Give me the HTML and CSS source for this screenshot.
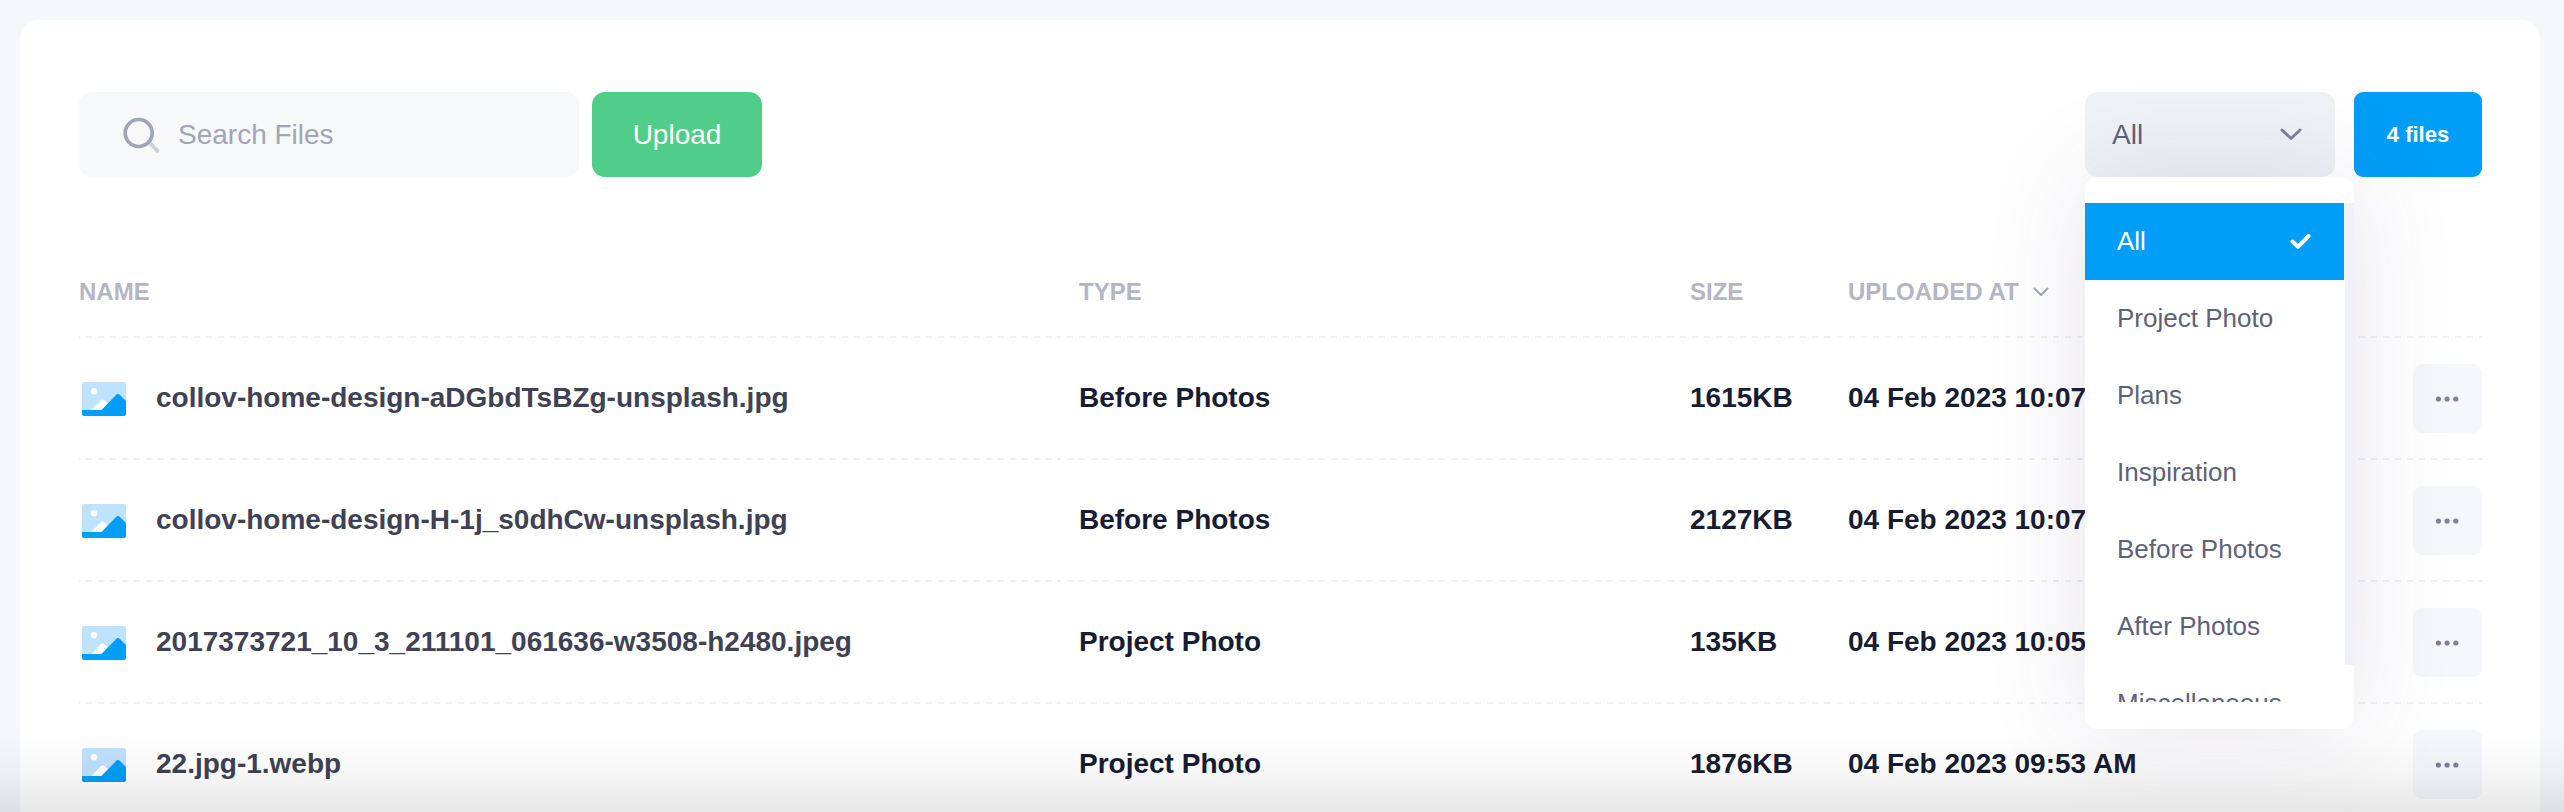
FILE: index.html
```html
<!DOCTYPE html>
<html lang="en">
<head>
<meta charset="utf-8">
<title>Files</title>
<link rel="stylesheet" href="styles.css">
</head>
<body>
<svg class="defs" aria-hidden="true">
  <symbol id="picture" viewBox="0 0 44 34">
    <rect width="44" height="34" rx="2" fill="#bfe2fe"/>
    <circle cx="12" cy="9.300" r="3.200" fill="#fff"/>
    <path d="M9 28 L19 18 Q20.500 16.500 22 18 L26 21 L20 28 Z" fill="#fff"/>
    <path d="M0 28 H19.500 L34 13 Q36 11.200 38 13 L44 19 V32 Q44 34 42 34 H2 Q0 34 0 32 Z" fill="#009ef7"/>
  </symbol>
  <symbol id="dots" viewBox="0 0 24 6">
    <circle cx="3.400" cy="3" r="2.600"/><circle cx="12.100" cy="3" r="2.600"/><circle cx="20.800" cy="3" r="2.600"/>
  </symbol>
</svg>
<main class="card">
  <header class="toolbar">
    <label class="search">
      <svg class="search-icon" width="40" height="40" viewBox="0 0 40 40" fill="none">
        <path d="M28 27 L35.300 34.800" stroke="#a1a5b7" stroke-opacity=".5" stroke-width="3.700" stroke-linecap="round"/>
        <circle cx="16.700" cy="17" r="13.500" stroke="#a1a5b7" stroke-width="3.700"/>
      </svg>
      <span>Search Files</span>
    </label>
    <button class="upload">Upload</button>
    <div class="filter">
      <div class="select">
        <span>All</span>
        <svg width="22" height="13" viewBox="0 0 22 13" fill="none" stroke="#7e8299" stroke-width="3" stroke-linecap="round" stroke-linejoin="round"><path d="M2 2 L11 10.500 L20 2"/></svg>
      </div>
      <div class="menu">
        <ul class="options">
          <li class="option selected">All
            <svg width="21" height="17" viewBox="0 0 21 17" fill="none" stroke="#fff" stroke-width="4" stroke-linecap="round" stroke-linejoin="round"><path d="M2.500 8.500 L8 13.800 L18.500 3"/></svg>
          </li>
          <li class="option">Project Photo</li>
          <li class="option">Plans</li>
          <li class="option">Inspiration</li>
          <li class="option">Before Photos</li>
          <li class="option">After Photos</li>
          <li class="option">Miscellaneous</li>
        </ul>
        <div class="scrollbar"></div>
      </div>
    </div>
    <div class="count">4 files</div>
  </header>

  <section class="table">
    <div class="row head">
      <div class="cell name">NAME</div>
      <div class="cell type">TYPE</div>
      <div class="cell size">SIZE</div>
      <div class="cell date">UPLOADED AT
        <svg width="16" height="10" viewBox="0 0 16 10" fill="none" stroke="#a1a5b7" stroke-width="2" stroke-linecap="round" stroke-linejoin="round"><path d="M1.500 1.500 L8 8 L14.500 1.500"/></svg>
      </div>
      <div class="cell action"></div>
    </div>
    <div class="row">
      <div class="cell name"><svg class="thumb"><use href="#picture"/></svg>collov-home-design-aDGbdTsBZg-unsplash.jpg</div>
      <div class="cell type">Before Photos</div>
      <div class="cell size">1615KB</div>
      <div class="cell date">04 Feb 2023 10:07 AM</div>
      <div class="cell action"><button class="more"><svg><use href="#dots"/></svg></button></div>
    </div>
    <div class="row">
      <div class="cell name"><svg class="thumb"><use href="#picture"/></svg>collov-home-design-H-1j_s0dhCw-unsplash.jpg</div>
      <div class="cell type">Before Photos</div>
      <div class="cell size">2127KB</div>
      <div class="cell date">04 Feb 2023 10:07 AM</div>
      <div class="cell action"><button class="more"><svg><use href="#dots"/></svg></button></div>
    </div>
    <div class="row">
      <div class="cell name"><svg class="thumb"><use href="#picture"/></svg>2017373721_10_3_211101_061636-w3508-h2480.jpeg</div>
      <div class="cell type">Project Photo</div>
      <div class="cell size">135KB</div>
      <div class="cell date">04 Feb 2023 10:05 AM</div>
      <div class="cell action"><button class="more"><svg><use href="#dots"/></svg></button></div>
    </div>
    <div class="row">
      <div class="cell name"><svg class="thumb"><use href="#picture"/></svg>22.jpg-1.webp</div>
      <div class="cell type">Project Photo</div>
      <div class="cell size">1876KB</div>
      <div class="cell date">04 Feb 2023 09:53 AM</div>
      <div class="cell action"><button class="more"><svg><use href="#dots"/></svg></button></div>
    </div>
  </section>
</main>
<div class="fade"></div>
</body>
</html>
```
FILE: styles.css
```css
* { box-sizing: border-box; }

body {
  margin: 0;
  height: 812px;
  overflow: hidden;
  padding: 20px 24px 0 20px;
  background: #f5f7fa;
  font-family: "Liberation Sans", Arial, sans-serif;
  font-size: 28px;
  color: #181c32;
}

.defs { position: absolute; width: 0; height: 0; }

button { border: 0; padding: 0; font: inherit; }

.card {
  height: 792px;
  padding: 72px 58px 0 59px;
  overflow: hidden;
  background: #fff;
  border-radius: 18px 18px 0 0;
}

/* Toolbar */
.toolbar { display: flex; height: 85px; }

.search {
  display: flex;
  align-items: center;
  width: 500px;
  margin-right: 13px;
  padding-left: 43px;
  background: #f6f8fa;
  border-radius: 13px;
  color: #a1a5b7;
}

.search-icon { margin: 2px 16px 0 0; }

.upload {
  width: 170px;
  background: #50cd89;
  border-radius: 13px;
  color: #fff;
}

.filter {
  position: relative;
  width: 250px;
  margin: 0 19px 0 auto;
}

.select {
  display: flex;
  align-items: center;
  justify-content: space-between;
  height: 85px;
  padding: 0 33px 0 27px;
  background: #eef3f7;
  border-radius: 13px;
  color: #5e6278;
}

.menu {
  position: absolute;
  z-index: 2;
  top: 85px;
  left: 0;
  display: flex;
  width: 269px;
  height: 552px;
  padding: 26px 0;
  background: #fff;
  border-radius: 13px;
  box-shadow: 0 0 100px rgba(82, 63, 105, .15);
}

.options {
  width: 259px;
  height: 499px;
  margin: 0 1px 0 0;
  padding: 0;
  overflow: hidden;
  list-style: none;
}

.option {
  display: flex;
  align-items: center;
  justify-content: space-between;
  height: 77px;
  padding: 0 33px 0 32px;
  color: #5e6278;
  font-size: 26px;
}

.option.selected { background: #009ef7; color: #fff; }

.scrollbar { width: 9px; height: 462px; background: #eff1f6; }

.count {
  display: flex;
  align-items: center;
  justify-content: center;
  width: 128px;
  background: #009ef7;
  border-radius: 9px;
  color: #fff;
  font-size: 22px;
  font-weight: bold;
}

/* Table */
.table { margin-top: 69px; }

.row {
  display: grid;
  grid-template-columns: 978px 612px 159px 384px 270px;
  height: 122px;
  font-weight: bold;
}

.cell {
  display: flex;
  align-items: center;
  padding: 0 0 2px 21px;
  white-space: nowrap;
  background: linear-gradient(90deg, #eff2f5 6px, transparent 6px) repeat-x left bottom / 12px 2px;
}

.name { padding-left: 0; color: #3f4254; background-position-x: 7px; }
.type { padding-left: 22px; background-position-x: -2px; }
.size { background-position-x: -1px; }
.date { padding-left: 20px; background-position-x: 9px; }
.action { justify-content: flex-end; background-position-x: 3px; }

.head { height: 92px; font-size: 24px; }
.head .cell { padding-bottom: 0; color: #b5b5c3; }
.head .date svg { margin-left: 14px; }

.thumb { width: 44px; height: 34px; margin: 2px 30px 0 3px; }

.more {
  display: flex;
  align-items: center;
  justify-content: center;
  width: 69px;
  height: 69px;
  margin-top: 1px;
  background: #f5f7fa;
  border-radius: 9px;
}

.more svg { width: 24px; height: 6px; margin-right: 1px; fill: #7e8299; }

/* Soft darkening along the bottom edge of the viewport */
.fade {
  position: fixed;
  z-index: 3;
  right: 0;
  bottom: 0;
  left: 0;
  height: 80px;
  background: linear-gradient(rgba(0, 0, 0, 0), rgba(0, 0, 0, .03) 50%, rgba(0, 0, 0, .095));
  pointer-events: none;
}
```
